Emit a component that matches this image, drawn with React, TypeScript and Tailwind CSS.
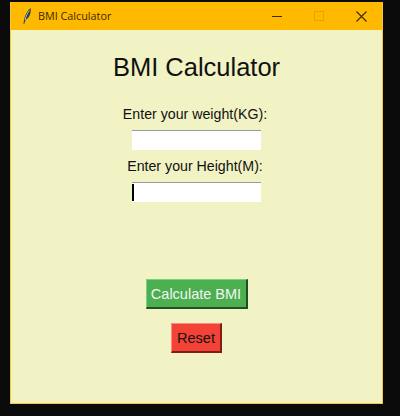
export default function App() {
  return (
    <div className="h-[416px] w-[400px] overflow-hidden bg-[#0b0b0b] pl-[10px] pt-[2px] font-['Liberation_Sans',Arial,sans-serif]">
      <div className="flex h-[402px] w-[373px] flex-col border border-t-0 border-[#f5c842]">
        <div className="flex h-[28px] items-center bg-[#ffb900] text-[#3a2a00]">
          <svg className="ml-[11px] h-[18px] w-[10px]" viewBox="0 0 10 18">
            <path d="M1.5 17 C2 12 3 6 8.5 1 C9.5 5 7.5 11 3.5 13 L2.2 17 Z" fill="#26404a" />
            <path d="M3 13 C4 9 5.5 6 7.5 3.5" stroke="#cfe0e6" strokeWidth="0.8" fill="none" />
          </svg>
          <span className="ml-[6px] text-[10.8px] font-['Open_Sans',sans-serif]">BMI Calculator</span>
          <div className="ml-auto flex items-center">
            <div className="flex w-[40px] justify-center">
              <div className="h-px w-[10px] bg-[#3a2a00]" />
            </div>
            <div className="flex w-[43px] justify-center">
              <div className="h-[10px] w-[10px] border border-[#e5a500]" />
            </div>
            <div className="flex w-[42px] justify-center">
              <svg className="h-[11px] w-[11px]" viewBox="0 0 11 11">
                <path d="M0.5 0.5 L10.5 10.5 M10.5 0.5 L0.5 10.5" stroke="#3a2a00" strokeWidth="1.1" />
              </svg>
            </div>
          </div>
        </div>
        <div className="flex flex-1 flex-col items-center bg-[#f1f3c4] text-[#111]">
          <h1 className="mt-[20px] text-[25.5px] leading-[34px]">BMI Calculator</h1>
          <label className="mt-[21px] pr-[3px] text-[14.2px] leading-[18px]">Enter your weight(KG):</label>
          <div className="mt-[7px] h-[20px] w-[129px] border-t border-[#9a9a9a] bg-white" />
          <label className="mt-[7px] pr-[3px] text-[14.2px] leading-[18px]">Enter your Height(M):</label>
          <div className="mt-[7px] h-[20px] w-[129px] border-t border-[#9a9a9a] bg-white pt-[1px]">
            <div className="h-[17px] w-[2px] bg-black" />
          </div>
          <button className="mt-[77px] h-[30px] w-[102px] border-r-2 border-b-2 border-t border-l border-r-[#1f4f22] border-b-[#1f4f22] border-t-[#7ccf80] border-l-[#7ccf80] bg-[#4caf50] pt-[2px] text-[14.5px] text-[#f4f4f4]">
            Calculate BMI
          </button>
          <button className="mt-[14px] h-[30px] w-[51px] border-r-2 border-b-2 border-t border-l border-r-[#7a1f1c] border-b-[#7a1f1c] border-t-[#ff8a85] border-l-[#ff8a85] bg-[#f44336] pt-[2px] text-[14.5px] text-[#111]">
            Reset
          </button>
        </div>
      </div>
    </div>
  );
}
